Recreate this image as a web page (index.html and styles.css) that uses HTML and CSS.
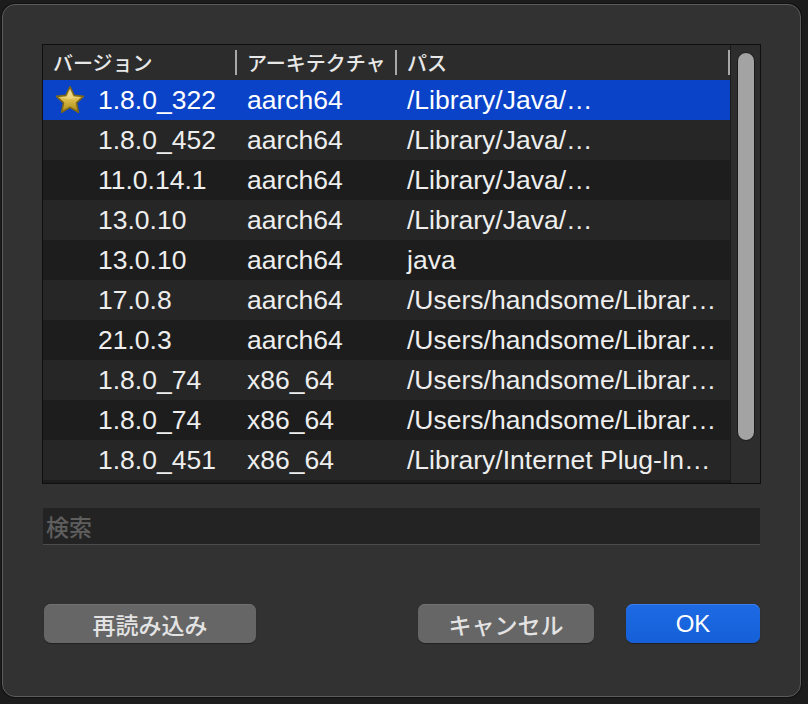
FILE: index.html
```html
<!DOCTYPE html>
<html lang="ja">
<head>
<meta charset="utf-8">
<link rel="stylesheet" href="styles.css">
</head>
<body>
<div class="window">
  <div class="table">
    <div class="list">
      <div class="header">
        <div class="hcell">バージョン</div><div class="sep"></div>
        <div class="hcell">アーキテクチャ</div><div class="sep"></div>
        <div class="hcell">パス</div><div class="sep"></div>
      </div>
      <div class="row selected">
        <div class="cell first"><span class="icon"><svg width="30" height="30" viewBox="0 0 30 30"><defs><linearGradient id="g" x1="0" y1="0" x2="0" y2="1"><stop offset="0" stop-color="#efdc92"/><stop offset="0.5" stop-color="#dcbd4c"/><stop offset="1" stop-color="#a98812"/></linearGradient></defs><path d="M15 1.8 L19.1 10.4 L28.4 11.4 L21.5 17.8 L23.4 27.2 L15 22.4 L6.6 27.2 L8.5 17.8 L1.6 11.4 L10.9 10.4 Z" fill="url(#g)" stroke="#7f6718" stroke-width="1.6" stroke-linejoin="round"/><path d="M15 5 L18 11.8 L25 12.6 L15 14 L5 12.6 L12 11.8 Z" fill="#fff3c0" opacity="0.35"/></svg></span>1.8.0_322</div>
        <div class="cell">aarch64</div>
        <div class="cell">/Library/Java/…</div>
      </div>
      <div class="row odd">
        <div class="cell first"><span class="icon"></span>1.8.0_452</div>
        <div class="cell">aarch64</div>
        <div class="cell">/Library/Java/…</div>
      </div>
      <div class="row even">
        <div class="cell first"><span class="icon"></span>11.0.14.1</div>
        <div class="cell">aarch64</div>
        <div class="cell">/Library/Java/…</div>
      </div>
      <div class="row odd">
        <div class="cell first"><span class="icon"></span>13.0.10</div>
        <div class="cell">aarch64</div>
        <div class="cell">/Library/Java/…</div>
      </div>
      <div class="row even">
        <div class="cell first"><span class="icon"></span>13.0.10</div>
        <div class="cell">aarch64</div>
        <div class="cell">java</div>
      </div>
      <div class="row odd">
        <div class="cell first"><span class="icon"></span>17.0.8</div>
        <div class="cell">aarch64</div>
        <div class="cell">/Users/handsome/Librar…</div>
      </div>
      <div class="row even">
        <div class="cell first"><span class="icon"></span>21.0.3</div>
        <div class="cell">aarch64</div>
        <div class="cell">/Users/handsome/Librar…</div>
      </div>
      <div class="row odd">
        <div class="cell first"><span class="icon"></span>1.8.0_74</div>
        <div class="cell">x86_64</div>
        <div class="cell">/Users/handsome/Librar…</div>
      </div>
      <div class="row even">
        <div class="cell first"><span class="icon"></span>1.8.0_74</div>
        <div class="cell">x86_64</div>
        <div class="cell">/Users/handsome/Librar…</div>
      </div>
      <div class="row odd">
        <div class="cell first"><span class="icon"></span>1.8.0_451</div>
        <div class="cell">x86_64</div>
        <div class="cell">/Library/Internet Plug-In…</div>
      </div>
      <div class="row even">
        <div class="cell first"><span class="icon"></span></div>
        <div class="cell"></div>
        <div class="cell"></div>
      </div>
    </div>
    <div class="scrollbar"><div class="thumb"></div></div>
  </div>
  <input class="search" type="text" placeholder="検索">
  <div class="buttons">
    <button class="btn reload">再読み込み</button>
    <div class="spacer"></div>
    <button class="btn cancel">キャンセル</button>
    <button class="btn ok">OK</button>
  </div>
</div>
</body>
</html>
```
FILE: styles.css
```css
* { box-sizing: border-box; }
html, body { margin: 0; padding: 0; }
body {
  background: #1c1c1c;
  width: 808px;
  height: 704px;
  overflow: hidden;
  font-family: "Liberation Sans", "Noto Sans CJK JP", sans-serif;
}
.window {
  margin: 4px 0 0 2px;
  width: 799px;
  height: 693px;
  background: #323232;
  border: 1px solid #5c5c5c;
  border-radius: 13px;
  box-shadow: 0 0 0 1px #111;
  padding: 39px 39px 0 39px;
  display: flex;
  flex-direction: column;
}
.table {
  height: 440px;
  border: 1px solid #0f0f0f;
  display: flex;
  overflow: hidden;
}
.list {
  flex: 1;
  display: flex;
  flex-direction: column;
  overflow: hidden;
}
.header {
  flex: 0 0 35px;
  height: 35px;
  background: #2c2c2c;
  display: grid;
  grid-template-columns: 192px 2px 158px 2px 1fr 2px;
  align-items: center;
  color: #e8e8e8;
  font-family: "Noto Sans CJK JP", sans-serif;
  font-weight: 500;
  font-size: 20px;
}
.hcell {
  padding-left: 10px;
  line-height: 35px;
  height: 35px;
  white-space: nowrap;
}
.sep {
  width: 2px;
  height: 25px;
  background: #a8a8a8;
  margin-top: -1px;
}
.row {
  flex: 0 0 40px;
  height: 40px;
  display: grid;
  grid-template-columns: 194px 160px 1fr;
  align-items: center;
  color: #eeeeee;
  font-size: 26.5px;
  white-space: nowrap;
}
.row.selected { background: #0a43c8; color: #fff; }
.row.odd { background: #262626; }
.row.even { background: #1d1d1d; }
.cell {
  padding-left: 10px;
  overflow: hidden;
  line-height: 40px;
}
.cell.first {
  padding-left: 12px;
  display: flex;
  align-items: center;
  gap: 13px;
}
.icon {
  width: 30px;
  height: 30px;
  flex: 0 0 30px;
  display: block;
}
.icon svg { display: block; }
.scrollbar {
  width: 30px;
  flex: 0 0 30px;
  background: #2d2d2d;
  border-left: 1px solid #1a1a1a;
  padding: 7px 0 0 6px;
}
.thumb {
  width: 18px;
  height: 389px;
  background: #a3a3a3;
  border: 1px solid #1a1a1a;
  border-radius: 9px;
}
.search {
  margin: 24px 1px 0 1px;
  height: 37px;
  background: #232323;
  border: 0;
  border-bottom: 1px solid #4c4c4c;
  padding: 0 0 0 3px;
  font-family: "Noto Sans CJK JP", sans-serif;
  font-weight: 500;
  font-size: 23px;
  color: #ddd;
  outline: none;
}
.search::placeholder { color: #5e5e5e; }
.buttons {
  margin: 59px 1px 0 2px;
  height: 39px;
  display: flex;
  align-items: stretch;
  gap: 32px;
}
.spacer { flex: 1; }
.btn {
  border: 0;
  border-radius: 7px;
  font-family: "Liberation Sans", "Noto Sans CJK JP", sans-serif;
  font-weight: 500;
  font-size: 23px;
  padding: 0;
  color: #e3e3e3;
  background: #666;
  box-shadow: inset 0 1px 0 #717171, 0 1px 1px rgba(0,0,0,0.35);
}
.reload { width: 212px; margin-right: -32px; }
.cancel { width: 176px; }
.ok {
  width: 134px;
  color: #fff;
  font-size: 24px;
  background: linear-gradient(#1d6ae4, #1560d8);
  box-shadow: inset 0 1px 0 #3a7ff0, 0 1px 1px rgba(0,0,0,0.35);
}
```
